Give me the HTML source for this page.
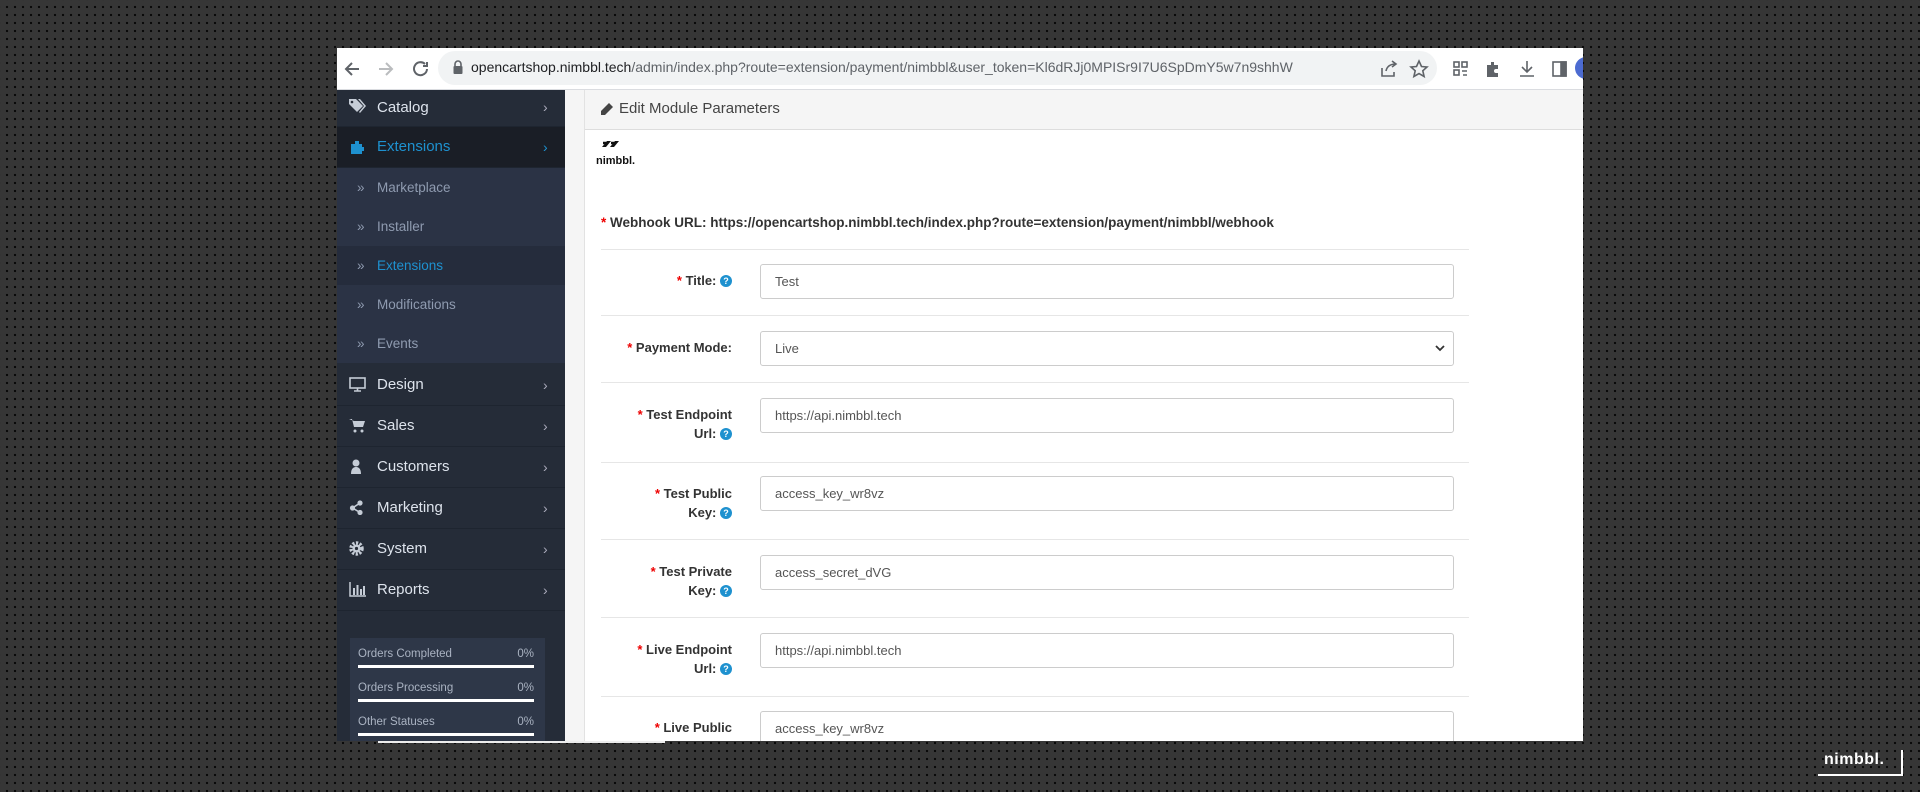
<!DOCTYPE html>
<html><head><meta charset="utf-8"><style>
*{margin:0;padding:0;box-sizing:border-box}
body{width:1920px;height:792px;overflow:hidden;background-color:#363636;background-image:radial-gradient(circle,#0a0a0a 1.1px,transparent 1.3px);background-size:8px 8px;background-position:3px 3px;font-family:"Liberation Sans",sans-serif;position:relative}
.win{position:absolute;left:337px;top:48px;width:1246px;height:693px;background:#fff;overflow:hidden}
.tb{position:absolute;left:0;top:0;width:100%;height:42px;background:#fff;border-bottom:1px solid #dadce0}
.addr{position:absolute;left:101px;top:3px;width:999px;height:34px;border-radius:17px;background:#f1f3f4}
.url{position:absolute;left:134px;top:11px;font-size:14px;color:#5f6368;white-space:nowrap}
.url b{font-weight:normal;color:#202124}
.side{position:absolute;left:0;top:42px;width:228px;height:651px;background:#252c38}
.it{position:absolute;left:0;width:228px;height:41px;border-bottom:1px solid #1e2530;color:#dde3ec;font-size:15px;line-height:40px;padding-left:40px}
.it .ic{position:absolute;left:12px;top:12px;width:17px;height:15px}
.it .ch{position:absolute;left:206px;top:0;color:#aab;font-size:14px}
.sub{position:absolute;left:0;width:228px;height:39px;background:#2b3345;color:#8f9bb0;font-size:13.5px;line-height:39px;padding-left:40px}
.sub:before{content:"»";position:absolute;left:20px;color:#8f9bb0}
.stats{position:absolute;left:13px;top:548px;width:195px;height:110px;background:#2e3748;color:#aab3c2;font-size:11.5px}
.st{position:absolute;left:8px;width:176px}
.st span{float:right}
.bar{position:absolute;left:8px;width:176px;height:3px;background:#fff}
.gap{position:absolute;left:228px;top:42px;width:20px;height:651px;background:#f5f5f5;border-right:1px solid #e2e2e2}
.hd{position:absolute;left:248px;top:42px;width:998px;height:40px;background:#f5f5f5;border-bottom:1px solid #ddd;font-size:15px;color:#444;line-height:38px;padding-left:34px}
.lbl{position:absolute;right:851px;width:150px;text-align:right;font-weight:bold;font-size:13px;color:#333;line-height:19px}
.lbl i{color:#e00;font-style:normal}
.q{display:inline-block;width:12px;height:12px;border-radius:6px;background:#1e91cf;color:#fff;font-size:9px;line-height:12px;text-align:center;vertical-align:1px}
.inp{position:absolute;left:423px;width:694px;height:35px;border:1px solid #ccc;border-radius:3px;font-size:13px;color:#555;line-height:33px;padding-left:14px}
.hr{position:absolute;left:264px;width:868px;height:1px;background:#e6e6e6}
</style></head><body>
<div class="win">
 <div class="tb">
  <svg style="position:absolute;left:6px;top:11px" width="100" height="20" viewBox="0 0 100 20" fill="none" stroke-width="2">
   <path d="M16 10H4M9 4L3 10L9 16" stroke="#5f6368"/>
   <path d="M36 10H48M43 4L49 10L43 16" stroke="#babcbe"/>
   <path d="M82 5A6.5 6.5 0 1 0 84 10M84 3V7H80" stroke="#5f6368"/>
  </svg>
  <div class="addr"></div>
  <svg style="position:absolute;left:115px;top:12px" width="12" height="15" viewBox="0 0 12 15"><path d="M3 6V4a3 3 0 0 1 6 0v2" stroke="#5f6368" stroke-width="1.6" fill="none"/><rect x="1.5" y="6" width="9" height="8" rx="1" fill="#5f6368"/></svg>
  <div class="url"><b>opencartshop.nimbbl.tech</b>/admin/index.php?route=extension/payment/nimbbl&amp;user_token=Kl6dRJj0MPISr9I7U6SpDmY5w7n9shhW</div>
  <svg style="position:absolute;left:1042px;top:11px" width="220" height="20" viewBox="0 0 220 20" fill="none" stroke="#5f6368" stroke-width="1.6">
   <path d="M3 9v8h12v-4M7 12c1-5 5-7 10-7M13 2l4 3-4 3"/>
   <path d="M40 2l2.5 5.5 5.5.5-4.2 3.8 1.3 5.7-5.1-3-5.1 3 1.3-5.7L32 8l5.5-.5z"/>
   <rect x="75" y="3" width="5" height="5"/><rect x="83" y="3" width="5" height="5"/><rect x="75" y="11" width="5" height="5"/><path d="M83 12h5M84 16h4"/>
   <path d="M108 6h4v-3h3v3h4v4h-2a2 2 0 0 0 0 4h2v4h-11z" fill="#5f6368" stroke="none"/>
   <path d="M148 2v11M143 8l5 5 5-5M141 17h14"/>
   <rect x="174" y="3" width="13" height="14"/><rect x="182" y="3" width="5" height="14" fill="#5f6368"/>
  </svg>
  <div style="position:absolute;left:1238px;top:9px;width:22px;height:22px;border-radius:11px;background:#4c6bd1"></div>
 </div>
 <div class="side">
  <div class="it" style="top:0;height:37px;line-height:35px;background:#252c38"><svg class="ic" style="top:9px" viewBox="0 0 17 15"><path d="M0 0h7l7 7-6 6-8-8z" fill="#c5ccd6"/><path d="M9 0h2l6 7-6 7-1-1 5-6z" fill="#c5ccd6"/><circle cx="3" cy="3" r="1.3" fill="#252c38"/></svg>Catalog<span class="ch">›</span></div>
  <div class="it" style="top:37px;background:#1a1e26;color:#1e91cf"><svg class="ic" viewBox="0 0 17 15"><path d="M2 5h4V2h4v3h3v3h2v4h-2v3H2z" fill="#1e91cf"/></svg>Extensions<span class="ch" style="color:#1e91cf">›</span></div>
  <div class="sub" style="top:78px">Marketplace</div>
  <div class="sub" style="top:117px">Installer</div>
  <div class="sub" style="top:156px;background:#252c3c;color:#1e91cf">Extensions</div>
  <div class="sub" style="top:195px">Modifications</div>
  <div class="sub" style="top:234px">Events</div>
  <div class="it" style="top:275px"><svg class="ic" viewBox="0 0 17 15"><rect x="1" y="1" width="15" height="10" fill="none" stroke="#c5ccd6" stroke-width="1.6"/><path d="M5 14h7M8.5 11v3" stroke="#c5ccd6" stroke-width="1.6"/></svg>Design<span class="ch">›</span></div>
  <div class="it" style="top:316px"><svg class="ic" viewBox="0 0 17 15"><path d="M0 1h3l2 8h9l2-6H5" fill="#c5ccd6"/><circle cx="6" cy="13" r="1.5" fill="#c5ccd6"/><circle cx="13" cy="13" r="1.5" fill="#c5ccd6"/></svg>Sales<span class="ch">›</span></div>
  <div class="it" style="top:357px"><svg class="ic" viewBox="0 0 17 15"><circle cx="7" cy="4" r="3.5" fill="#c5ccd6"/><path d="M2 15c0-6 3-7 5-7s5 1 5 7z" fill="#c5ccd6"/></svg>Customers<span class="ch">›</span></div>
  <div class="it" style="top:398px"><svg class="ic" viewBox="0 0 17 15"><circle cx="11" cy="3" r="2.6" fill="#c5ccd6"/><circle cx="3.5" cy="8" r="2.6" fill="#c5ccd6"/><circle cx="11" cy="12.5" r="2.6" fill="#c5ccd6"/><path d="M11 3L3.5 8 11 12.5" stroke="#c5ccd6" stroke-width="1.6" fill="none"/></svg>Marketing<span class="ch">›</span></div>
  <div class="it" style="top:439px"><svg class="ic" viewBox="0 0 17 15"><circle cx="7.5" cy="7.5" r="5.5" fill="none" stroke="#c5ccd6" stroke-width="3.5" stroke-dasharray="2.2 1.4"/><circle cx="7.5" cy="7.5" r="4" fill="#c5ccd6"/><circle cx="7.5" cy="7.5" r="1.6" fill="#252c38"/></svg>System<span class="ch">›</span></div>
  <div class="it" style="top:480px"><svg class="ic" viewBox="0 0 17 15"><path d="M1 0v14h16" stroke="#c5ccd6" stroke-width="1.5" fill="none"/><path d="M4 6h2v7H4zM7.5 3h2v10h-2zM11 7h2v6h-2zM14 4h2v9h-2z" fill="#c5ccd6"/></svg>Reports<span class="ch">›</span></div>
  <div class="stats">
   <div class="st" style="top:10px">Orders Completed<span>0%</span></div><div class="bar" style="top:27px"></div>
   <div class="st" style="top:44px">Orders Processing<span>0%</span></div><div class="bar" style="top:61px"></div>
   <div class="st" style="top:78px">Other Statuses<span>0%</span></div><div class="bar" style="top:95px"></div>
  </div>
 </div>
 <div class="gap"></div>
 <div class="hd"><svg style="position:absolute;left:15px;top:13px" width="13" height="13" viewBox="0 0 13 13"><path d="M9 0l4 4-8 8H1V8z" fill="#444"/></svg>Edit Module Parameters</div>
 <svg style="position:absolute;left:259px;top:89px" width="44" height="30" viewBox="0 0 44 30"><path d="M6 10l5-6h4l-5 6zM14 10l5-6h4l-5 6z" fill="#111"/><path d="M7 6h5M15 6h5" stroke="#111" stroke-width="2.5"/><text x="0" y="27" font-family="Liberation Sans" font-weight="bold" font-size="11" fill="#111">nimbbl.</text></svg>
 <div style="position:absolute;left:264px;top:167px;font-size:13.5px;font-weight:bold;color:#333"><span style="color:#e00">*</span> Webhook URL: https://opencartshop.nimbbl.tech/index.php?route=extension/payment/nimbbl/webhook</div>
 <div class="hr" style="top:201px"></div>
 <div class="lbl" style="top:223px"><i>*</i> Title: <span class="q">?</span></div>
 <div class="inp" style="top:216px">Test</div>
 <div class="hr" style="top:267px"></div>
 <div class="lbl" style="top:290px"><i>*</i> Payment Mode:</div>
 <div class="inp" style="top:283px">Live<svg style="position:absolute;right:8px;top:13px" width="10" height="7" viewBox="0 0 10 7"><path d="M1 1l4 4 4-4" stroke="#333" stroke-width="1.8" fill="none"/></svg></div>
 <div class="hr" style="top:334px"></div>
 <div class="lbl" style="top:357px"><i>*</i> Test Endpoint<br>Url: <span class="q">?</span></div>
 <div class="inp" style="top:350px">https://api.nimbbl.tech</div>
 <div class="hr" style="top:414px"></div>
 <div class="lbl" style="top:436px"><i>*</i> Test Public<br>Key: <span class="q">?</span></div>
 <div class="inp" style="top:428px">access_key_wr8vz</div>
 <div class="hr" style="top:491px"></div>
 <div class="lbl" style="top:514px"><i>*</i> Test Private<br>Key: <span class="q">?</span></div>
 <div class="inp" style="top:507px">access_secret_dVG</div>
 <div class="hr" style="top:569px"></div>
 <div class="lbl" style="top:592px"><i>*</i> Live Endpoint<br>Url: <span class="q">?</span></div>
 <div class="inp" style="top:585px">https://api.nimbbl.tech</div>
 <div class="hr" style="top:648px"></div>
 <div class="lbl" style="top:670px"><i>*</i> Live Public<br>Key: <span class="q">?</span></div>
 <div class="inp" style="top:663px">access_key_wr8vz</div>
</div>
<div style="position:absolute;left:378px;top:741px;width:287px;height:2px;background:#eee"></div>
<div style="position:absolute;left:1824px;top:751px;color:#fff;font-weight:bold;font-size:16px;letter-spacing:0.5px">nimbbl.</div>
<div style="position:absolute;left:1818px;top:774px;width:85px;height:2px;background:#fff"></div>
<div style="position:absolute;left:1901px;top:750px;width:2px;height:26px;background:#fff"></div>
</body></html>
